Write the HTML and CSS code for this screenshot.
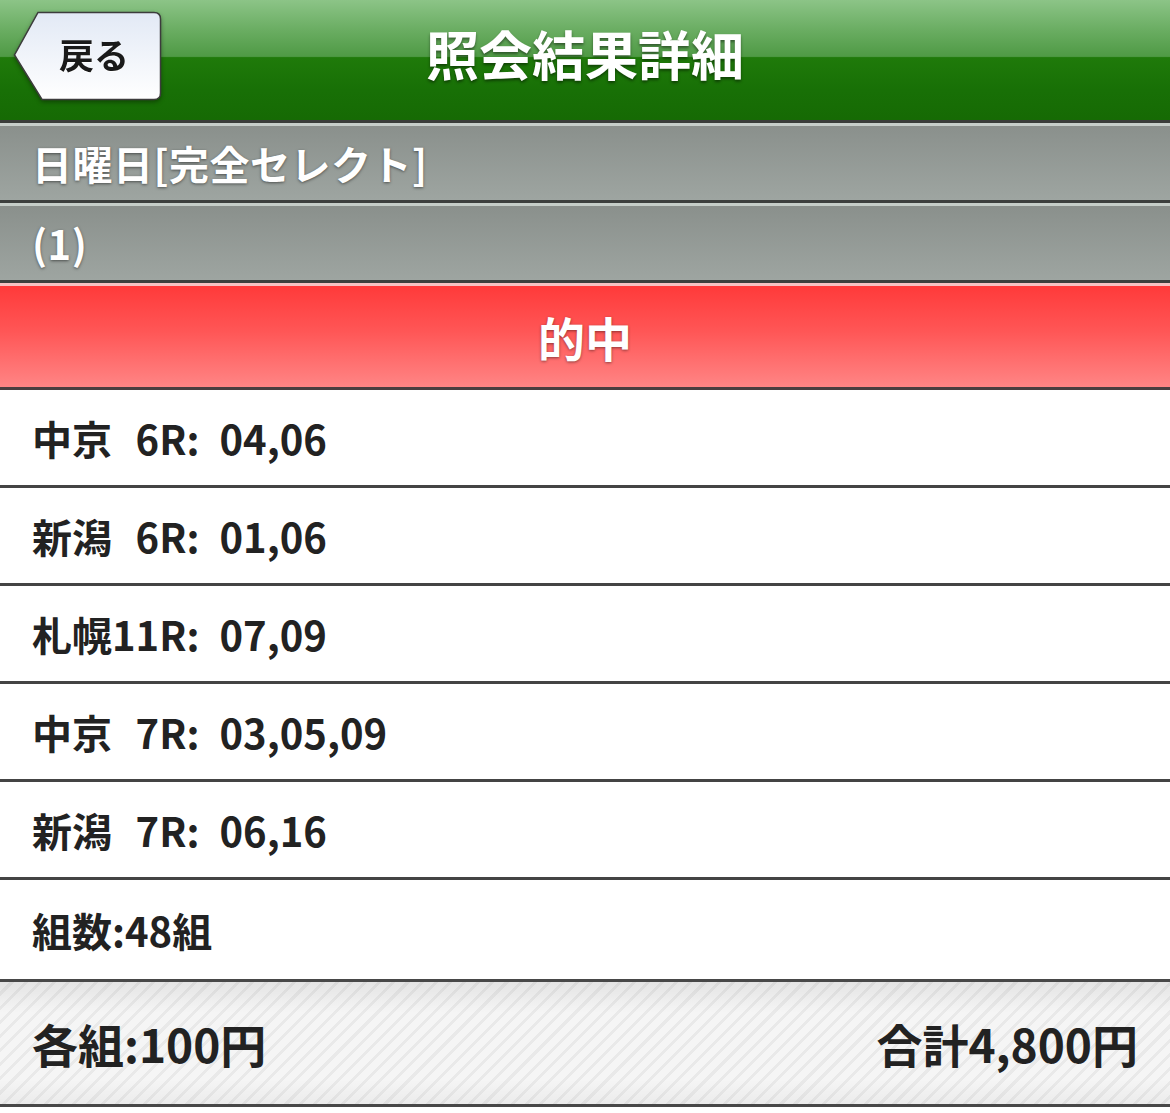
FILE: index.html
```html
<!DOCTYPE html>
<html lang="ja">
<head>
<meta charset="utf-8">
<title>照会結果詳細</title>
<link rel="stylesheet" href="styles.css">
</head>
<body>
<header class="topbar">
  <a class="back" href="#">
    <svg class="back-shape" width="150" height="92" viewBox="0 0 150 92">
      <defs>
        <linearGradient id="bg" x1="0" y1="0" x2="0" y2="1">
          <stop offset="0" stop-color="#e2e9f5"/>
          <stop offset="1" stop-color="#ffffff"/>
        </linearGradient>
      </defs>
      <path d="M25,1.5 L141,1.5 Q147.5,1.5 147.5,8 L147.5,82 Q147.5,88.5 141,88.5 L29,88.5 L1.5,44 Z" fill="url(#bg)" stroke="#3c3c3c" stroke-width="1.5"/>
    </svg>
    <span class="back-label">戻る</span>
  </a>
  <h1 class="title">照会結果詳細</h1>
</header>
<div class="grayrow">日曜日[完全セレクト]</div>
<div class="grayrow">(1)</div>
<div class="hit">的中</div>
<ul class="list">
  <li class="item">中京&#8199;6R:&ensp;04,06</li>
  <li class="item">新潟&#8199;6R:&ensp;01,06</li>
  <li class="item">札幌11R:&ensp;07,09</li>
  <li class="item">中京&#8199;7R:&ensp;03,05,09</li>
  <li class="item">新潟&#8199;7R:&ensp;06,16</li>
  <li class="item">組数:48組</li>
</ul>
<footer class="summary">
  <span>各組:100円</span>
  <span>合計4,800円</span>
</footer>
</body>
</html>
```
FILE: styles.css
```css
* { box-sizing: border-box; }
html, body { margin: 0; padding: 0; background: #ffffff; }
body {
  font-family: "Noto Sans CJK JP", "Noto Sans", sans-serif;
  font-weight: 700;
  width: 1170px;
}
.topbar {
  position: relative;
  height: 123px;
  border-bottom: 3px solid #3a3d3a;
  background: linear-gradient(to bottom, #8cc487 0%, #6aad62 25%, #4f9a45 47%, #1f7a0a 48%, #187006 75%, #166a04 100%);
  display: flex;
  align-items: center;
  justify-content: center;
}
.title {
  margin: 0;
  color: #ffffff;
  font-size: 53px;
  font-weight: 700;
  line-height: 1;
  letter-spacing: 0;
  text-shadow: 0 2px 3px rgba(0,0,0,0.45);
  padding-bottom: 14px;
}
.back {
  position: absolute;
  left: 13px;
  top: 11px;
  width: 150px;
  height: 92px;
  text-decoration: none;
  filter: drop-shadow(0 2px 2px rgba(0,0,0,0.35));
}
.back-shape { position: absolute; left: 0; top: 0; }
.back-label {
  position: absolute;
  left: 46px;
  top: 21px;
  font-size: 35px;
  line-height: 44px;
  color: #1a1a1a;
  text-shadow: 0 1px 0 rgba(255,255,255,0.8);
}
.grayrow {
  height: 80px;
  border-top: 3px solid #c6cec9;
  border-bottom: 3px solid #3d403e;
  background: linear-gradient(to bottom, #8a908c, #9ea5a1);
  color: #ffffff;
  font-size: 40px;
  letter-spacing: 0.5px;
  line-height: 1;
  padding-left: 32px;
  display: flex;
  align-items: center;
  text-shadow: 0 1px 3px rgba(0,0,0,0.5);
}
.hit {
  height: 107px;
  border-top: 3px solid #f6c3c3;
  border-bottom: 3px solid #4a3e40;
  background: linear-gradient(to bottom, #ff3a3a, #ff5656 45%, #ff8585);
  color: #ffffff;
  font-size: 47px;
  display: flex;
  align-items: center;
  justify-content: center;
  text-shadow: 0 1px 3px rgba(0,0,0,0.45);
}
.list { list-style: none; margin: 0; padding: 0; }
.item {
  height: 98px;
  border-bottom: 3px solid #444444;
  background: #ffffff;
  color: #222222;
  font-size: 40px;
  padding-left: 32px;
  display: flex;
  align-items: center;
  line-height: 1;
}
.item:last-child { height: 99px; border-bottom: none; }
.summary {
  height: 128px;
  border-top: 3px solid #484848;
  border-bottom: 3px solid #484848;
  background:
    linear-gradient(to bottom, rgba(0,0,0,0.07), rgba(0,0,0,0) 25%, rgba(0,0,0,0) 80%, rgba(0,0,0,0.04)),
    repeating-linear-gradient(135deg, #f5f5f5 0px, #f5f5f5 7px, #e9e9e9 7px, #e9e9e9 10px);
  color: #222222;
  font-size: 46px;
  display: flex;
  align-items: center;
  justify-content: space-between;
  padding: 0 32px;
  line-height: 1;
}
```
